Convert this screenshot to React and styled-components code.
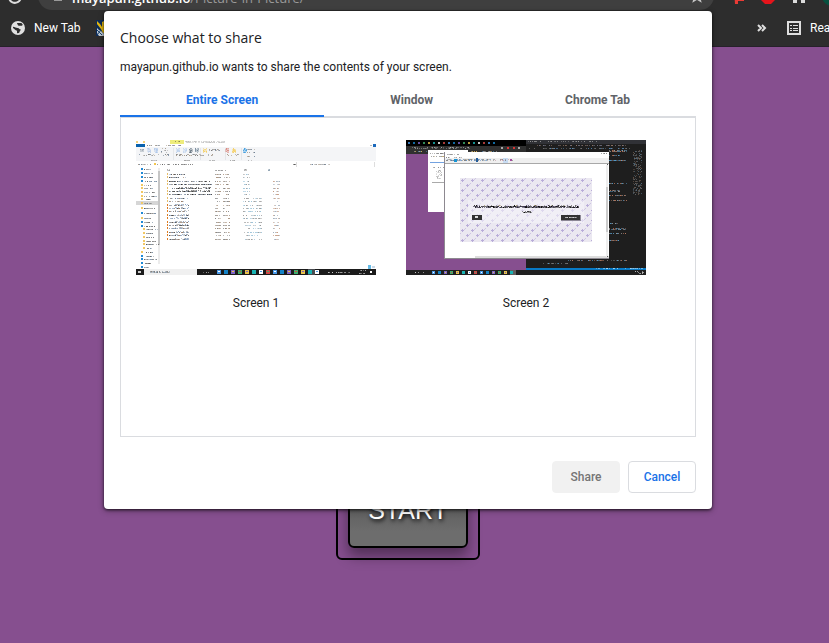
import React, { useState } from "react";
import styled, { createGlobalStyle } from "styled-components";

const GlobalStyle = createGlobalStyle`
  *, *::before, *::after { box-sizing: border-box; }
  html, body { margin: 0; }
  body {
    font-family: Roboto, "Noto Sans", sans-serif;
    font-size: 12px;
    overflow: hidden;
  }
  button { font: inherit; cursor: pointer; }
`;

const Browser = styled.div`
  position: relative;
  display: flex;
  flex-direction: column;
  min-height: 100vh;
  overflow: hidden;
  background: #864f8f;
`;

const Toolbar = styled.header`
  display: flex;
  align-items: flex-end;
  height: 10px;
  padding: 0 0 0 8px;
  gap: 16px;
  overflow: hidden;
  background: #2d2d2d;
`;

const IconButton = styled.button`
  display: flex;
  padding: 0 0 ${(p) => p.$lift || 6}px;
  border: 0;
  background: none;
  color: #dcdcdc;
`;

const Omnibox = styled.div`
  flex: 1;
  display: flex;
  align-items: center;
  gap: 10px;
  height: 28px;
  padding: 0 10px 0 16px;
  border-radius: 14px;
  background: #3f3f3f;
  color: #9a9a9a;
  font-family: "Open Sans", sans-serif;
  font-size: 13px;
`;

const Address = styled.div`
  flex: 1;
  padding-top: 4px;
  line-height: 20px;
  white-space: nowrap;
`;

const Host = styled.span`
  color: #ffffff;
  font-weight: 600;
`;

const Extensions = styled.div`
  display: flex;
  align-items: flex-end;
  gap: 16px;
  flex: none;
  width: 99px;
  overflow: hidden;
`;

const BookmarksBar = styled.nav`
  display: flex;
  align-items: center;
  height: 37px;
  padding: 0 0 0 11px;
  gap: 16px;
  background: #2d2d2d;
  border-bottom: 1px solid #26212a;
`;

const Bookmark = styled.a`
  display: flex;
  align-items: center;
  gap: 9px;
  color: #ffffff;
  text-decoration: none;
  white-space: nowrap;
`;

const BookmarkTail = styled.div`
  display: flex;
  align-items: center;
  gap: 10px;
  flex: none;
  width: 72px;
  margin-left: auto;
  color: #dedede;
`;

const MoreButton = styled.button`
  display: flex;
  padding: 0;
  border: 0;
  background: none;
  color: inherit;
`;

const Separator = styled.span`
  width: 1px;
  height: 16px;
  background: #5c5c5c;
`;

const Page = styled.main`
  flex: 1;
  display: flex;
  justify-content: center;
  align-items: flex-start;
  padding: 414px 13px 0 0;
`;

const StartFrame = styled.div`
  padding: 10px;
  border: 2px solid #000;
  border-radius: 6px;
`;

const StartButton = styled.button`
  display: block;
  width: 120px;
  height: 75px;
  padding: 0;
  border: 2px solid #000;
  border-radius: 6px;
  background: linear-gradient(#4b4b4b, #6d6d6d 80%);
  box-shadow: 0 8px 14px rgba(0, 0, 0, 0.4);
  color: #fff;
  font-family: "Liberation Sans", Arial, sans-serif;
  font-size: 25px;
  text-shadow: 1px 2px 4px #000;
`;

const Overlay = styled.div`
  position: absolute;
  inset: 11px 13px auto 0;
  display: flex;
  justify-content: center;
`;

const Dialog = styled.section`
  display: flex;
  flex-direction: column;
  width: 100%;
  max-width: 608px;
  padding: 16px;
  border-radius: 4px;
  background: #fff;
  box-shadow: 0 1px 3px rgba(0, 0, 0, 0.7), 0 2px 6px rgba(0, 0, 0, 0.3);
  color: #202124;
`;

const Title = styled.h1`
  margin: 0 0 8px;
  font-family: "Open Sans", sans-serif;
  font-size: 14px;
  font-weight: 400;
  line-height: 22px;
`;

const Message = styled.p`
  margin: 0 0 8px;
  line-height: 20px;
`;

const TabStrip = styled.div`
  display: flex;
  height: 32px;
  box-shadow: inset 0 -1px #dadce0;
`;

const Tab = styled.button`
  flex: 1 1 auto;
  padding: 0;
  border: 0;
  border-bottom: 2px solid ${(p) => (p.$active ? "#1a73e8" : "transparent")};
  background: none;
  color: ${(p) => (p.$active ? "#1a73e8" : "#5f6368")};
  font-weight: 700;
`;

const Sources = styled.div`
  display: flex;
  flex-wrap: wrap;
  align-items: flex-start;
  gap: 30px;
  min-height: 320px;
  padding: 22px 15px;
  border: 1px solid #dadce0;
`;

const Source = styled.button`
  display: flex;
  flex-direction: column;
  align-items: center;
  gap: 18px;
  width: 240px;
  padding: 0;
  border: 0;
  background: none;
  color: #202124;
  line-height: 20px;
`;

const Actions = styled.footer`
  display: flex;
  justify-content: flex-end;
  gap: 8px;
  padding-top: 24px;
`;

const Action = styled.button`
  width: 68px;
  height: 32px;
  padding: 0;
  border: 1px solid ${(p) => (p.disabled ? "#f1f1f1" : "#dadce0")};
  border-radius: 4px;
  background: ${(p) => (p.disabled ? "#f1f1f1" : "#fff")};
  color: ${(p) => (p.disabled ? "#757575" : "#1a73e8")};
  font-weight: 500;
  cursor: ${(p) => (p.disabled ? "default" : "pointer")};
`;

const Preview = styled.svg`
  display: block;
`;

/* A run of tiny marks that stands for a line of text at thumbnail size. */
function Marks({ x, y, w, h = 1, colors = ["#777"], density = 0.7 }) {
  const out = [];
  for (let r = 0; r < h; r++) {
    for (let i = 0; i < w; i++) {
      const n = Math.abs(Math.sin((x + i) * 12.9898 + (y + r) * 78.233) * 43758.5453) % 1;
      if (n < density) {
        out.push(
          <rect
            key={r * w + i}
            x={x + i}
            y={y + r}
            width="1"
            height="1"
            fill={colors[Math.floor(n * 1000) % colors.length]}
            opacity={0.45 + ((n * 97) % 1) * 0.55}
          />
        );
      }
    }
  }
  return <g>{out}</g>;
}

const range = (n) => Array.from({ length: n }, (_, i) => i);
const GREYS = ["#777", "#999", "#6f8298", "#a99b8b"];
const ICONS = ["#4a9ae8", "#3fae6d", "#ffffff", "#1583c7", "#e8c34b", "#d14848", "#7d64c5", "#19b4b4"];

function ExplorerPreview() {
  return (
    <Preview width="240" height="135" viewBox="0 0 240 135" shapeRendering="crispEdges" aria-hidden="true">
      <rect width="240" height="135" fill="#fff" />
      <rect x="34" width="14" height="4" fill="#eeec7c" />
      <Marks x={39} y={1} w={5} colors={["#777144"]} />
      <Marks x={49} y={1} w={40} h={2} colors={["#bbb", "#d1d1d1"]} />
      <rect y="1" x="0" width="2" height="2" fill="#f6d37c" />
      <rect x="7" y="1" width="2" height="2" fill="#f6d37c" />
      <rect y="4" width="9" height="3" fill="#0a62ad" />
      <Marks x={11} y={5} w={5} colors={GREYS} />
      <Marks x={19} y={5} w={5} colors={GREYS} />
      <Marks x={28} y={5} w={7} colors={GREYS} />
      <Marks x={36} y={5} w={9} colors={["#8880b0", "#777"]} />
      <rect x="234" y="5" width="2" height="1" fill="#bbb" />
      <rect x="237" y="4" width="3" height="3" fill="#1b69bc" />
      <rect y="7" width="240" height="14" fill="#f4f5f7" />
      {[37, 64, 89, 105].map((x) => (
        <rect key={x} x={x} y="8" width="1" height="12" fill="#e4e6e9" />
      ))}
      {[[4, "#8c99a6"], [11, "#b8cbe8"], [18, "#a9c4e9"], [40, "#bdd1ed"], [47, "#bdd1ed"], [53, "#63717e"], [59, "#6e8496"], [67, "#f4cf65"], [89, "#d9847a"], [96, "#f4cf65"], [107, "#3d9cdf"]].map(([x, c]) => (
        <g key={x}>
          <rect x={x} y="9" width="4" height="3" fill={c} opacity="0.4" />
          <Marks x={x} y={8} w={4} h={5} colors={[c]} density={0.5} />
        </g>
      ))}
      <Marks x={1} y={14} w={32} h={2} colors={GREYS} density={0.35} />
      <Marks x={23} y={8} w={10} h={5} colors={GREYS} density={0.24} />
      <Marks x={40} y={14} w={38} h={2} colors={GREYS} density={0.35} />
      <Marks x={73} y={9} w={12} h={2} colors={GREYS} density={0.5} />
      <Marks x={90} y={14} w={15} h={2} colors={GREYS} density={0.35} />
      {[9, 12, 16].map((y) => (
        <Marks key={y} x={111} y={y} w={9} colors={GREYS} density={0.6} />
      ))}
      {[15, 48, 73, 93, 112].map((x) => (
        <Marks key={x} x={x} y={20} w={6} colors={["#999"]} />
      ))}
      <Marks x={2} y={24} w={13} colors={GREYS} density={0.4} />
      <rect x="18" y="23" width="2" height="2" fill="#f3c64e" />
      <Marks x={21} y={24} w={36} colors={["#555", "#777"]} />
      <Marks x={157} y={24} w={3} colors={["#555"]} />
      <rect x="160" y="22" width="1" height="5" fill="#ddd" />
      <Marks x={174} y={24} w={20} colors={GREYS} />
      <rect x="238" y="22" width="1" height="5" fill="#ddd" />
      <rect y="61" width="24" height="4" fill="#d6d6d6" />
      <rect x="22" y="28" width="2" height="96" fill="#ececec" />
      <rect x="22" y="31" width="2" height="74" fill="#c6c6c6" />
      {[29, 33, 37, 41, 45, 48, 52, 56, 59, 63, 68, 73, 78, 82, 86, 89, 93, 97, 101, 104, 108, 112, 116, 119, 123, 127].map((y, i) => (
        <g key={y}>
          <rect
            x={i > 14 && i < 21 ? 7 : 5}
            y={y - 1}
            width="2"
            height="2"
            fill={i < 4 || i === 11 || (i > 12 && i < 15) || i > 21 ? "#2089d5" : "#f1c865"}
          />
          <Marks x={i > 14 && i < 21 ? 10 : 8} y={y} w={7 + (i % 4) * 2} colors={["#555", "#777", "#7d93a8"]} />
        </g>
      ))}
      <Marks x={30} y={29} w={4} h={2} colors={["#999"]} />
      <Marks x={79} y={30} w={12} colors={["#999"]} />
      <Marks x={107} y={29} w={4} h={2} colors={["#999"]} />
      <Marks x={132} y={29} w={2} h={2} colors={["#91a4b3"]} density={1} />
      {range(20).map((i) => {
        const y = 34 + Math.round(i * 3.4);
        const long = i > 1 && i < 7;
        return (
          <g key={i}>
            <rect x="31" y={y - 1} width="1" height="2" fill={i > 8 ? "#e07c1f" : "#e7bd69"} />
            <Marks
              x={33}
              y={y}
              w={long ? 43 - (i % 3) : 16 + (i > 8 ? 4 : i % 4)}
              colors={long ? ["#222", "#444", "#6d7f97"] : ["#4a4a4a", "#6b7b90", "#8aa4c4", "#91745f"]}
              density={0.8}
            />
            {i > 8 && <Marks x={39} y={y - 1} w={14} colors={["#8aa4c4", "#aaa"]} density={0.5} />}
            {i > 3 && i < 6 && <Marks x={42} y={y - 1} w={34} colors={["#777"]} density={0.5} />}
            <Marks x={79} y={y} w={6} colors={["#888", "#a9937f"]} density={0.7} />
            <Marks x={87} y={y} w={7} colors={["#888", "#a9937f"]} density={0.6} />
            <Marks x={107} y={y} w={i > 6 ? 19 : 7} colors={["#999", "#9cc3d9"]} density={0.6} />
            {i > 1 && <Marks x={137} y={y} w={7} colors={["#c39a82", "#9ba9b7"]} density={0.6} />}
          </g>
        );
      })}
      <rect x="232" y="125" width="3" height="4" fill="#67bbe6" />
      <rect x="236" y="126" width="3" height="2" fill="#c9d9e8" />
      <rect y="129" width="240" height="6" fill="#1b1b1b" />
      <rect x="8" y="129" width="53" height="6" fill="#f0f0f0" />
      <rect x="2" y="131" width="3" height="2" fill="#ccc" />
      <Marks x={14} y={131} w={20} h={2} colors={["#777", "#8297aa"]} />
      <Marks x={64} y={132} w={11} colors={["#bbb"]} density={0.5} />
      <rect x="172" y="129" width="7" height="6" fill="#494c50" />
      {range(15).map((i) => (
        <g key={i}>
          <rect x={81 + i * 7} y="130" width="4" height="4" fill={ICONS[(i * 3) % 8]} />
          <rect x={82 + i * 7} y="131" width="2" height="1" fill={ICONS[(i + 2) % 8]} />
        </g>
      ))}
      <Marks x={189} y={132} w={26} colors={["#ddd", "#999"]} density={0.5} />
      <Marks x={223} y={130} w={7} colors={["#aaa"]} density={0.7} />
      <Marks x={223} y={133} w={7} colors={["#aaa"]} density={0.7} />
      <rect x="234" y="131" width="2" height="2" fill="#fff" />
    </Preview>
  );
}

function DesktopPreview() {
  return (
    <Preview width="240" height="135" viewBox="0 0 240 135" shapeRendering="crispEdges" aria-hidden="true">
      <defs>
        <pattern id="plus" width="10" height="10" patternUnits="userSpaceOnUse" x="55" y="39">
          <path d="M0 1h3v1H0zM1 0h1v3H1zM5 6h3v1H5zM6 5h1v3H6z" fill="#b9add9" />
          <path d="M3 0h1v1H3zM8 5h1v1H8zM4 9h1v1H4zM9 4h1v1H9z" fill="#cec6e2" />
        </pattern>
      </defs>
      <rect width="240" height="135" fill="#864f8f" />
      <rect x="120" width="120" height="130" fill="#1e1e1e" />
      <rect width="120" height="6" fill="#000" />
      <rect y="6" width="120" height="8" fill="#303030" />
      {range(18).map((i) => (
        <rect key={i} x={2 + i * 5} y="2" width="2" height="2" fill={ICONS[(i * 3) % 8]} opacity="0.8" />
      ))}
      <Marks x={2} y={7} w={62} h={2} colors={["#aaa", "#777"]} density={0.35} />
      <Marks x={3} y={11} w={90} colors={["#d3ac55", "#aaa", "#5095c5"]} density={0.45} />
      {[95, 101, 107, 112].map((x, i) => (
        <rect key={x} x={x} y="7" width="2" height="2" fill={i === 1 || i === 2 ? "#d73434" : "#aaa"} />
      ))}
      <rect x="120" width="120" height="4" fill="#303136" />
      <Marks x={121} y={1} w={70} colors={["#999"]} density={0.35} />
      <Marks x={130} y={5} w={90} h={1} colors={["#778", "#997c6c"]} density={0.5} />
      <Marks x={121} y={8} w={105} colors={["#578bb8", "#727272"]} density={0.45} />
      {[10, 15, 20, 43, 50, 55, 60, 83, 88, 93, 100].map((y, i) => (
        <Marks key={y} x={203} y={y} w={i % 3 === 0 ? 18 : 5 + (i % 3) * 6} h={i % 4 === 0 ? 2 : 1} colors={["#b5785e", "#599bc8", "#999"]} density={0.7} />
      ))}
      <Marks x={227} y={10} w={9} h={45} colors={["#656565", "#556d7e", "#655346"]} density={0.38} />
      <Marks x={160} y={120} w={61} colors={["#b5785e", "#599bc8", "#777"]} density={0.55} />
      <Marks x={135} y={123} w={30} colors={["#599bc8", "#777"]} density={0.3} />
      <rect x="22" y="10" width="40" height="62" fill="#fff" />
      <Marks x={24} y={13} w={15} colors={["#777"]} />
      <Marks x={24} y={16} w={15} colors={["#bba36a", "#999"]} />
      <rect x="24" y="22" width="15" height="1" fill="#73a2e0" />
      <Marks x={26} y={27} w={12} colors={["#888"]} density={0.6} />
      <Marks x={30} y={30} w={6} h={9} colors={["#aaa", "#c6c6c6"]} density={0.5} />
      <rect x="26" y="42" width="13" height="1" fill="#aaa" />
      <rect x="38" y="12" width="165" height="107" fill="#8d8990" />
      <rect x="39" y="12" width="164" height="106" fill="#fff" />
      <Marks x={41} y={14} w={12} colors={["#888"]} density={0.6} />
      <Marks x={40} y={17} w={17} colors={["#888", "#aaa"]} density={0.6} />
      <rect x="39" y="18" width="164" height="5" fill="#efefef" />
      <rect x="39" y="23" width="164" height="1" fill="#a8a8a8" />
      <Marks x={40} y={19} w={45} h={2} colors={["#777", "#6694c7", "#b2a28a"]} density={0.65} />
      <rect x="48" y="19" width="3" height="3" fill="#1694d4" />
      <rect x="70" y="18" width="2" height="4" fill="#245d9b" />
      <rect x="97" y="18" width="5" height="5" fill="#c8dcf3" />
      <Marks x={87} y={19} w={20} h={2} colors={["#888", "#bc8e9d"]} density={0.45} />
      <rect x="104" y="19" width="2" height="2" fill="#a34c9e" />
      <Marks x={193} y={13} w={8} colors={["#777"]} density={0.5} />
      <rect x="54" y="38" width="132" height="64" fill="#ebe8f1" />
      <rect x="54" y="38" width="132" height="64" fill="url(#plus)" />
      <rect x="62" y="60" width="116" height="23" fill="#f5f3fa" opacity="0.6" />
      <Marks x={67} y={66} w={106} h={2} colors={["#000", "#111", "#1d1730"]} density={0.83} />
      <Marks x={68} y={65} w={103} colors={["#111", "#777", "#aa9e72"]} density={0.42} />
      <Marks x={116} y={71} w={10} h={2} colors={["#111", "#666"]} density={0.78} />
      <rect x="66" y="75" width="10" height="5" fill="#333" />
      <rect x="69" y="76" width="3" height="2" fill="#ddd" />
      <rect x="155" y="75" width="20" height="6" fill="#8c8795" />
      <rect x="155" y="75" width="19" height="5" fill="#333" />
      <Marks x={159} y={77} w={12} colors={["#ddd"]} density={0.85} />
      <rect x="69" y="116" width="134" height="2" fill="#ddd" />
      <rect x="200" y="25" width="2" height="92" fill="#eee" />
      <rect x="200" y="47" width="2" height="45" fill="#ccc" />
      <rect x="201" y="24" width="1" height="1" fill="#555" />
      <rect x="201" y="116" width="1" height="1" fill="#555" />
      <rect x="120" y="128" width="120" height="2" fill="#087ac5" />
      <Marks x={190} y={128} w={48} colors={["#b3daf2"]} density={0.4} />
      <rect y="130" width="240" height="5" fill="#202020" />
      <Marks x={2} y={132} w={16} colors={["#ccc"]} density={0.28} />
      <rect x="104" y="130" width="6" height="5" fill="#606060" />
      {range(14).map((i) => (
        <g key={i}>
          <rect x={26 + i * 6} y="131" width="3" height="3" fill={ICONS[(i * 3) % 8]} />
          <rect x={27 + i * 6} y="132" width="1" height="1" fill={ICONS[(i + 2) % 8]} />
        </g>
      ))}
      <Marks x={229} y={131} w={9} h={3} colors={["#bbb"]} density={0.35} />
    </Preview>
  );
}

const ReloadIcon = () => (
  <svg width="14" height="14" viewBox="0 0 14 14" aria-hidden="true">
    <path d="M11.6 3.1A6 6 0 1 0 12.8 8" fill="none" stroke="currentColor" strokeWidth="2" />
    <path d="M13 0v6H7z" fill="currentColor" />
  </svg>
);

const LockIcon = () => (
  <svg width="8" height="12" viewBox="0 0 8 12" aria-hidden="true">
    <path d="M0 4h8v7H0z" fill="currentColor" />
    <path d="M2 4V2a2 2 0 0 1 4 0v2" fill="none" stroke="currentColor" />
  </svg>
);

const StarIcon = () => (
  <svg width="14" height="14" viewBox="0 0 14 14" aria-hidden="true">
    <path d="M7 1.5l1.6 3.8 4 .3-3.1 2.600 1 4L7 10l-3.500 2.200 1-4-3.100-2.600 4-.3z" fill="none" stroke="#c4c4c4" strokeWidth="1.5" />
  </svg>
);

const GlobeIcon = () => (
  <svg width="14" height="14" viewBox="0 0 14 14" aria-hidden="true">
    <circle cx="7" cy="7" r="7" fill="#e0e0e0" />
    <path d="M2 5.8c2 .2 3.2 1.2 4.7 1.1 1.5-.2 1.4 1.8 3.2 1.5-.2 1.3-1.3 1.3-1.5 3.1-.4.8-1.6 1-2.4.6V9.7C4.2 9.6 3.4 7.8 2 7zM6 2h4.4l1.4 1.7c-.2 1.1-1.6.9-2.6 1.1C7.9 5 6.9 4.7 6.8 3.8 6.6 3.2 6 3 6 2z" fill="#2d2d2d" />
  </svg>
);

const CrestIcon = () => (
  <svg width="16" height="16" viewBox="0 0 16 16" aria-hidden="true">
    <rect width="16" height="16" fill="#0d2c59" />
    <path d="M1 1l3 3 2 3V2l4-2v13H7L5 9 1 4z" fill="#e5b90f" />
    <path d="M1 8l2 2 2 1 2 2 2 1v2H3l-2-3z" fill="#c2cbd4" />
    <path d="M1 10l5 5M5 10l-4 5" stroke="#16406d" />
  </svg>
);

const ReadingListIcon = () => (
  <svg width="14" height="14" viewBox="0 0 14 14" aria-hidden="true" shapeRendering="crispEdges">
    <path d="M0 0h14v14H0zM2 2v10h10V2z" fillRule="evenodd" fill="#dedede" />
    <path d="M3 4h2v1H3zM6 4h5v1H6zM3 7h2v1H3zM6 7h5v1H6zM3 9h2v1H3zM6 9h5v1H6z" fill="#dedede" />
  </svg>
);

const TABS = ["Entire Screen", "Window", "Chrome Tab"];

export default function App() {
  const [tab, setTab] = useState(TABS[0]);

  return (
    <Browser>
      <GlobalStyle />
      <Toolbar>
        <IconButton aria-label="Reload"><ReloadIcon /></IconButton>
        <Omnibox>
          <LockIcon />
          <Address role="textbox" aria-label="Address" tabIndex={0}>
            <Host>mayapun.github.io</Host>/Picture-in-Picture/
          </Address>
          <StarIcon />
        </Omnibox>
        <Extensions>
          <IconButton $lift={6} aria-label="Pinterest">
            <svg width="14" height="14" viewBox="0 0 14 14" aria-hidden="true">
              <path d="M4 0h8v9h2v2H8v3H5z" fill="#e93b35" />
            </svg>
          </IconButton>
          <IconButton $lift={6} aria-label="Blocker">
            <svg width="16" height="16" viewBox="0 0 16 16" aria-hidden="true">
              <path d="M5 0h6l5 5v6l-5 5H5l-5-5V5z" fill="#e5141b" />
              <path d="M6 6h4v6H6z" fill="#fff" />
            </svg>
          </IconButton>
          <IconButton $lift={7} aria-label="Extensions">
            <svg width="14" height="14" viewBox="0 0 14 14" aria-hidden="true">
              <path d="M1 3h4a2 2 0 0 1 4 0h4v11H9v-2a2 2 0 0 0-4 0v2H1z" fill="#dcdcdc" />
            </svg>
          </IconButton>
          <IconButton $lift={4} aria-label="Profile">
            <svg width="20" height="20" viewBox="0 0 20 20" aria-hidden="true">
              <circle cx="10" cy="10" r="10" fill="#07503f" />
            </svg>
          </IconButton>
        </Extensions>
      </Toolbar>

      <BookmarksBar>
        <Bookmark href="#new-tab"><GlobeIcon />New Tab</Bookmark>
        <Bookmark href="#crest" aria-label="Bookmark"><CrestIcon /></Bookmark>
        <BookmarkTail>
          <MoreButton aria-label="More bookmarks">
            <svg width="10" height="8" viewBox="0 0 10 8" aria-hidden="true">
              <path d="M1 1l3 3-3 3M5 1l3 3-3 3" fill="none" stroke="currentColor" strokeWidth="2" />
            </svg>
          </MoreButton>
          <Separator />
          <Bookmark href="#reading"><ReadingListIcon />Rea</Bookmark>
        </BookmarkTail>
      </BookmarksBar>

      <Page>
        <StartFrame>
          <StartButton>START</StartButton>
        </StartFrame>
      </Page>

      <Overlay>
        <Dialog role="dialog" aria-labelledby="share-title">
          <Title id="share-title">Choose what to share</Title>
          <Message>mayapun.github.io wants to share the contents of your screen.</Message>
          <TabStrip role="tablist">
            {TABS.map((name) => (
              <Tab key={name} role="tab" aria-selected={tab === name} $active={tab === name} onClick={() => setTab(name)}>
                {name}
              </Tab>
            ))}
          </TabStrip>
          <Sources role="tabpanel">
            <Source><ExplorerPreview />Screen 1</Source>
            <Source><DesktopPreview />Screen 2</Source>
          </Sources>
          <Actions>
            <Action disabled>Share</Action>
            <Action>Cancel</Action>
          </Actions>
        </Dialog>
      </Overlay>
    </Browser>
  );
}
